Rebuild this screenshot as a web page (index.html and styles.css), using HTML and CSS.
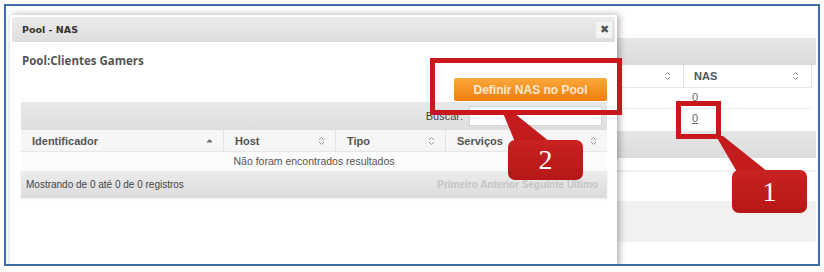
FILE: index.html
```html
<!DOCTYPE html>
<html lang="pt-br">
<head>
  <meta charset="UTF-8" />
  <title>Pool - NAS</title>
  <link rel="stylesheet" href="styles.css">
</head>
<body>
  <div class="frame">

    <!-- pagina por tras do dialogo -->
    <div class="page">
      <div class="band"></div>
      <div class="grid-head">
        <div class="gcell"><span></span>
          <svg class="sort" viewBox="0 0 7 10"><path d="M1 4 L3.5 1.5 L6 4 M1 6 L3.5 8.5 L6 6"/></svg>
        </div>
        <div class="gcell"><span>NAS</span>
          <svg class="sort" viewBox="0 0 7 10"><path d="M1 4 L3.5 1.5 L6 4 M1 6 L3.5 8.5 L6 6"/></svg>
        </div>
      </div>
      <div class="grid-row r1"><div></div><div class="num">0</div></div>
      <div class="grid-row r2"><div></div><div class="num"><a href="#">0</a></div></div>
      <div class="band"></div>
      <div class="blank short"></div>
      <div class="blank tall"></div>
      <div class="blank grey"></div>
    </div>

    <!-- dialogo -->
    <div class="modal">
      <div class="modal-head">
        <span class="modal-title">Pool - NAS</span>
        <span class="close">&#10006;</span>
      </div>
      <div class="modal-body">
        <h2>Pool:Clientes Gamers</h2>
        <div class="actions">
          <button class="btn-orange">Definir NAS no Pool</button>
        </div>
        <div class="toolbar">
          <label>Buscar:</label>
          <input type="text">
        </div>
        <div class="thead">
          <div class="th">Identificador
            <svg class="sort asc" viewBox="0 0 7 10"><path d="M1 6 L3.5 3.5 L6 6 Z"/></svg>
          </div>
          <div class="th">Host
            <svg class="sort" viewBox="0 0 7 10"><path d="M1 4 L3.5 1.5 L6 4 M1 6 L3.5 8.5 L6 6"/></svg>
          </div>
          <div class="th">Tipo
            <svg class="sort" viewBox="0 0 7 10"><path d="M1 4 L3.5 1.5 L6 4 M1 6 L3.5 8.5 L6 6"/></svg>
          </div>
          <div class="th">Serviços
            <svg class="sort" viewBox="0 0 7 10"><path d="M1 4 L3.5 1.5 L6 4 M1 6 L3.5 8.5 L6 6"/></svg>
          </div>
        </div>
        <div class="empty">Não foram encontrados resultados</div>
        <div class="tfoot">
          <span>Mostrando de 0 até 0 de 0 registros</span>
          <span class="pager">Primeiro Anterior Seguinte Último</span>
        </div>
      </div>
    </div>

    <!-- marcacoes do tutorial -->
    <svg class="tails" viewBox="0 0 812 258">
      <polygon points="497,107 508,107 544,136 509,136"/>
      <polygon points="710,130 717,130 762,166 731,166"/>
    </svg>
    <div class="mark mark-btn"></div>
    <div class="mark mark-nas"></div>
    <div class="bubble bubble-2">2</div>
    <div class="bubble bubble-1">1</div>
  </div>
</body>
</html>
```

FILE: styles.css
```css
body {
  margin: 0;
  background-color: #ffffff;
  font-family: "Liberation Sans", Arial, sans-serif;
  font-size: 11px;
  color: #555;
}

.frame {
  position: relative;
  margin: 4px;
  height: 258px;
  border: 2px solid #3e6ca5;
  overflow: hidden;
  background-color: #ffffff;
}

/* pagina de fundo */
.page {
  padding: 32px 2px 0 14px;
}

.band {
  height: 27px;
  background: linear-gradient(#e6e6e6, #dcdcdc);
}

.grid-head,
.grid-row {
  display: grid;
  grid-template-columns: 1fr 128px;
  margin-right: 4px;
}

.grid-head {
  height: 22px;
  border-bottom: 1px solid #e8e8e8;
}

.gcell {
  display: flex;
  align-items: center;
  justify-content: space-between;
  padding: 0 12px 0 10px;
  border-right: 1px solid #e4e4e4;
  font-weight: bold;
  color: #555;
}

.grid-row.r1 {
  height: 20px;
  border-bottom: 1px solid #eeeeee;
}

.grid-row.r2 {
  height: 22px;
}

.num {
  padding: 3px 0 0 8px;
  color: #666;
}

.num a {
  color: #666;
}

.blank.short {
  height: 12px;
  border-bottom: 2px solid #f0f0f0;
}

.blank.tall {
  height: 29px;
}

.blank.grey {
  height: 41px;
  background-color: #f1f1f1;
}

.sort {
  width: 7px;
  height: 10px;
  fill: none;
  stroke: #999;
  stroke-width: 1;
}

.sort.asc {
  fill: #777;
  stroke: #777;
}

/* dialogo */
.modal {
  position: absolute;
  left: 4px;
  top: 9px;
  bottom: -4px;
  width: 607px;
  padding: 2px;
  box-sizing: border-box;
  background-color: #ffffff;
  box-shadow: 2px 0 7px rgba(0, 0, 0, 0.35);
}

.modal-head {
  display: flex;
  align-items: center;
  justify-content: space-between;
  height: 25px;
  padding: 0 3px 0 10px;
  background: linear-gradient(#ececec, #dddddd);
  border-radius: 2px;
}

.modal-title {
  font-family: "DejaVu Sans", sans-serif;
  font-weight: bold;
  font-size: 9.5px;
  color: #333;
}

.close {
  display: flex;
  align-items: center;
  justify-content: center;
  width: 16px;
  height: 16px;
  background-color: #f4f4f4;
  color: #555;
  font-size: 11px;
}

.modal-body {
  padding: 0 8px 0 9px;
}

h2 {
  margin: 11px 0 0 1px;
  font-family: "Open Sans", sans-serif;
  font-size: 11.5px;
  line-height: 16px;
  color: #555;
}

.actions {
  display: flex;
  justify-content: flex-end;
  margin-top: 9px;
}

.btn-orange {
  width: 153px;
  height: 23px;
  border: none;
  border-radius: 2px;
  background: linear-gradient(#fba83a, #f07c0e);
  color: #fde9d2;
  font-family: "Liberation Sans", Arial, sans-serif;
  font-weight: bold;
  font-size: 12px;
}

.toolbar {
  display: flex;
  justify-content: flex-end;
  align-items: center;
  gap: 6px;
  height: 28px;
  margin-top: 1px;
  padding-right: 5px;
  background: linear-gradient(#e8e8e8, #dedede);
}

.toolbar label {
  color: #444;
}

.toolbar input {
  width: 133px;
  height: 20px;
  box-sizing: border-box;
  border: 1px solid #d4d4d4;
  background-color: #ffffff;
}

.thead {
  display: grid;
  grid-template-columns: 203px 112px 110px 1fr;
  height: 21px;
  background-color: #f6f6f6;
  border-bottom: 1px solid #e6e6e6;
}

.th {
  display: flex;
  align-items: center;
  justify-content: space-between;
  padding: 0 10px 0 11px;
  border-right: 1px solid #e2e2e2;
  font-weight: bold;
  color: #555;
}

.th:last-child {
  border-right: none;
}

.empty {
  height: 19px;
  line-height: 18px;
  text-align: center;
  font-size: 10.5px;
  color: #555;
  background-color: #fbfbfb;
}

.tfoot {
  display: flex;
  align-items: center;
  justify-content: space-between;
  height: 27px;
  padding: 0 9px 0 5px;
  background: linear-gradient(#ececec, #dcdcdc);
  box-shadow: 0 1px 2px rgba(0, 0, 0, 0.08);
  font-size: 10px;
  color: #444;
}

.pager {
  font-weight: bold;
  color: #c4c4c4;
}

/* marcacoes */
.tails {
  position: absolute;
  left: 0;
  top: 0;
  width: 812px;
  height: 258px;
  fill: #c41c1e;
}

.mark {
  position: absolute;
  box-sizing: border-box;
  border: 5px solid #c8181e;
}

.mark-btn {
  left: 424px;
  top: 52px;
  width: 192px;
  height: 57px;
}

.mark-nas {
  left: 670px;
  top: 95px;
  width: 45px;
  height: 38px;
}

.bubble {
  position: absolute;
  display: flex;
  align-items: center;
  justify-content: center;
  width: 75px;
  border-radius: 7px;
  background: linear-gradient(#c92222, #b51717);
  color: #ffffff;
  font-family: "Liberation Serif", serif;
  font-size: 28px;
}

.bubble-2 {
  left: 502px;
  top: 134px;
  height: 40px;
}

.bubble-1 {
  left: 726px;
  top: 164px;
  height: 43px;
}
```
